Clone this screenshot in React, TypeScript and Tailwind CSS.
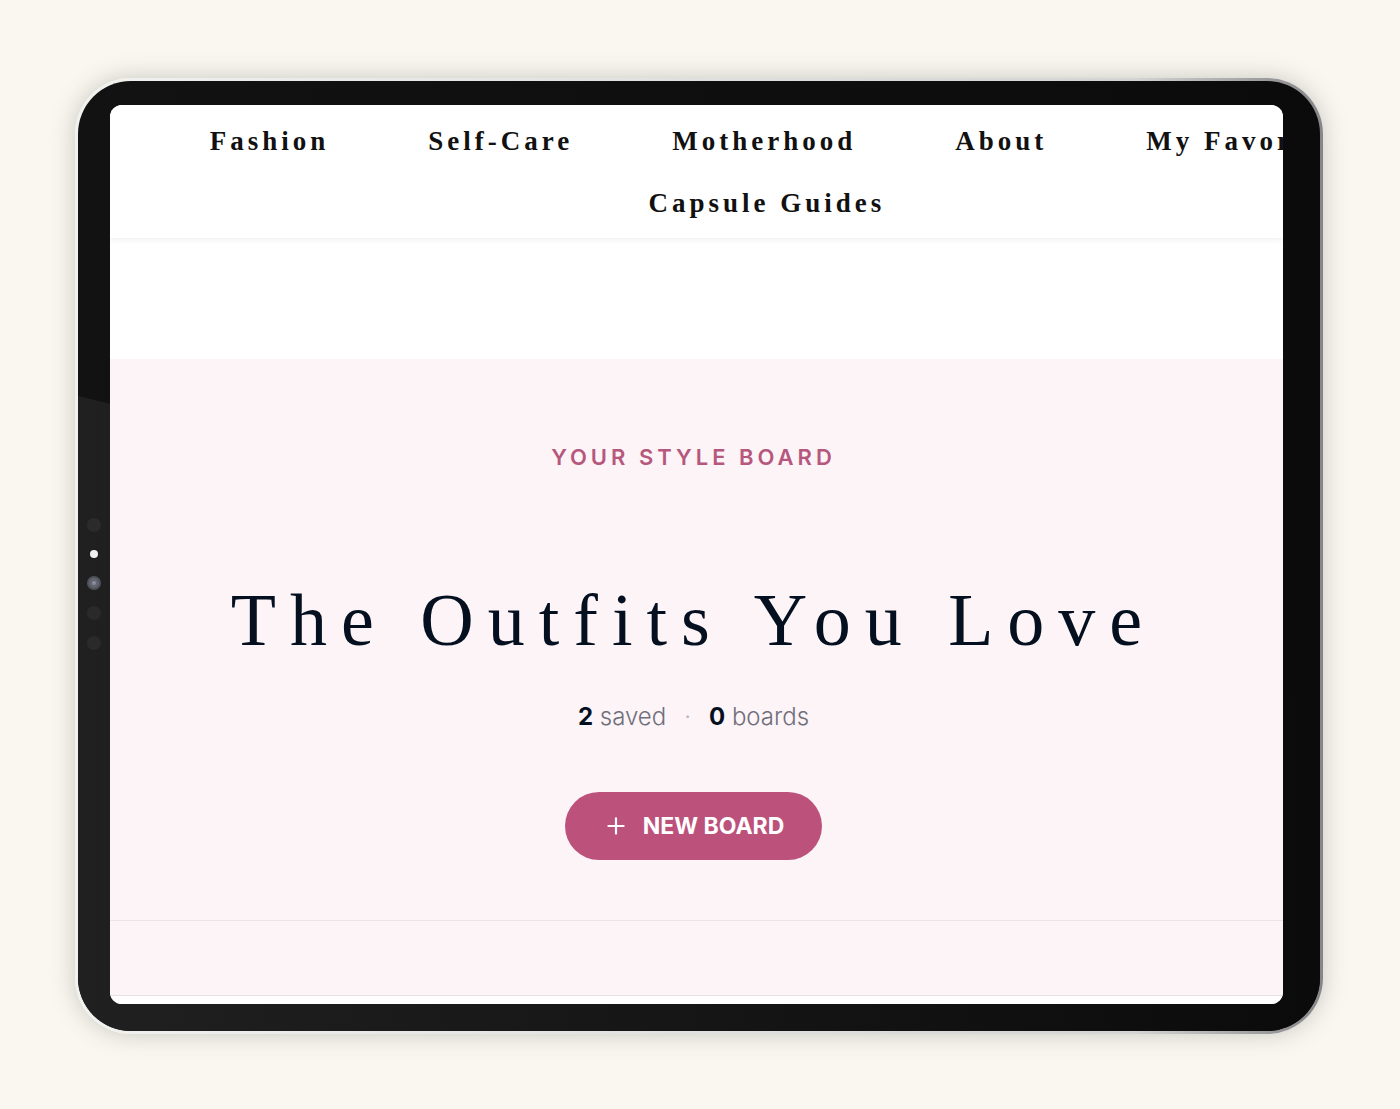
import { Plus } from 'lucide-react'

const links = ['Fashion', 'Self-Care', 'Motherhood', 'About', 'My Favorites', 'Capsule Guides']

const Sensors = () => {
    return (
        <div className="relative w-8 shrink-0 flex flex-col items-center justify-center pt-[58px]">
            <div className="flex flex-col items-center gap-4">
                <span className="size-3.5 rounded-full bg-[#2b2b2b]"></span>
                <span className="size-2 rounded-full bg-[#f0f0f0] my-0.5"></span>
                <span className="size-3.5 rounded-full bg-[#62646f] border-2 border-[#50525a] flex items-center justify-center">
                    <span className="size-1 rounded-full bg-[#8a8d9c]"></span>
                </span>
                <span className="size-3.5 rounded-full bg-[#2a2a2a]"></span>
                <span className="size-3.5 rounded-full bg-[#2a2a2a]"></span>
            </div>
        </div>
    )
}

const Header = () => {
    return (
        <header className="bg-white pt-[5px] pb-1 shadow-[0_1px_6px_rgba(0,0,0,0.08)] overflow-x-clip">
            <nav className="w-[112%]">
                <ul className="flex flex-wrap justify-center gap-x-[99px] font-['Liberation_Serif',serif] font-bold text-[27px] leading-[62px] tracking-[4px] text-[#111111]">
                    {links.map((link) => (
                        <li key={link} className={link === 'My Favorites' ? '-mr-6' : ''}>
                            <a href="#" className="whitespace-nowrap">{link}</a>
                        </li>
                    ))}
                </ul>
            </nav>
        </header>
    )
}

const Hero = () => {
    return (
        <section className="bg-[#fdf4f7] border-b border-[#ebe3e6] pt-[82px] pb-[60px] pr-1.5 flex flex-col items-center text-center">
            <p className="font-semibold text-[22px] leading-8 tracking-[4px] text-[#b6587e]">YOUR STYLE BOARD</p>
            <h1 className="mt-[99px] font-['Liberation_Serif',serif] text-[74px] leading-[96px] tracking-[14px] whitespace-nowrap text-[#04101f]">The Outfits You Love</h1>
            <p className="mt-[33px] flex items-center text-2xl leading-8 font-light text-[#6f6f7b]">
                <span><strong className="font-bold text-[#04101f]">2</strong> saved</span>
                <span className="mx-[18px] text-[#b9b2bb]">·</span>
                <span><strong className="font-bold text-[#04101f]">0</strong> boards</span>
            </p>
            <button className="mt-[59px] h-[68px] px-[38px] rounded-full bg-[#bc527c] text-white font-bold text-[23px] flex items-center gap-3.5">
                <Plus size={26} strokeWidth={2} />
                NEW BOARD
            </button>
        </section>
    )
}

const App = () => {
    return (
        <main className="min-h-screen bg-[#faf7f1] pl-[75px] pr-[77px] pt-[78px] pb-[75px] font-['Inter',sans-serif]">
            <div className="rounded-[56px] p-[3px] bg-linear-to-r from-[#f1f1ef] via-[#d4d4d2] via-85% to-[#85858a] shadow-[0_0_24px_rgba(70,80,60,0.28)]">
                <div className="relative overflow-hidden rounded-[53px] bg-linear-to-r from-[#121212] to-[#0b0b0b] flex pt-6 pb-[27px] pr-[37px]">
                    <div className="absolute inset-0 bg-linear-to-r from-[#202020] to-[#0b0b0b] [clip-path:polygon(0_315px,100%_616px,100%_100%,0_100%)]"></div>
                    <Sensors />
                    <div className="relative flex-1 min-w-0 overflow-hidden rounded-xl bg-white">
                        <Header />
                        <div className="h-[121px]"></div>
                        <Hero />
                        <div className="h-[75px] bg-[#fdf4f7] border-b border-[#e6e0e3]"></div>
                        <div className="h-2 bg-white"></div>
                    </div>
                </div>
            </div>
        </main>
    )
}

export default App
